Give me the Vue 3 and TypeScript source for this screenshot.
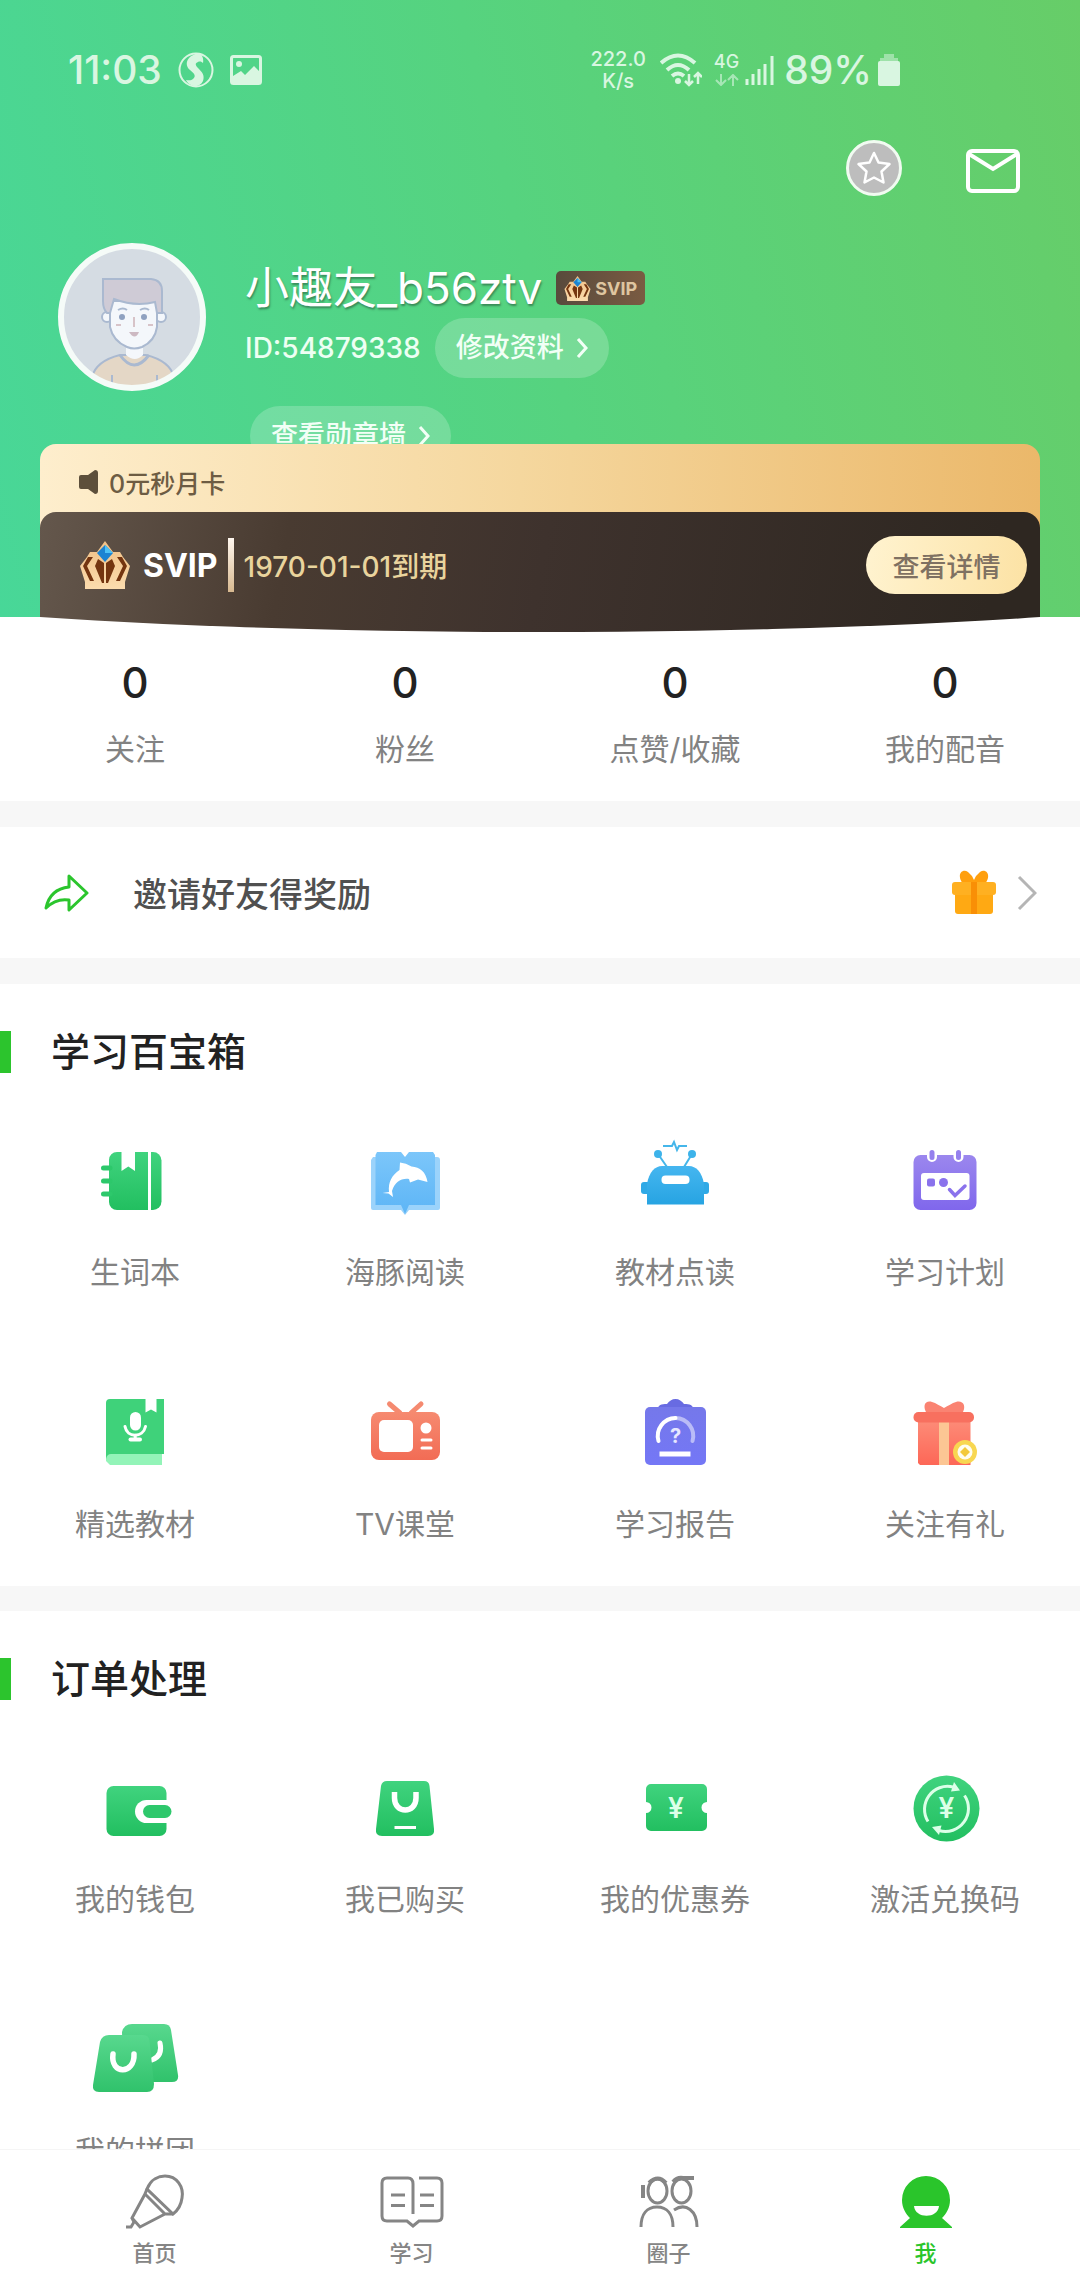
<script setup lang="ts">
interface Entry {
  label: string
  icon: string
}

interface Section {
  title: string
  entries: Entry[]
}

interface Tab extends Entry {
  active?: boolean
}

const stats = [
  { value: 0, label: '关注' },
  { value: 0, label: '粉丝' },
  { value: 0, label: '点赞/收藏' },
  { value: 0, label: '我的配音' },
]

// Inner markup of the 96x96 feature icons
const icons: Record<string, string> = {
  notebook: `
    <path fill="url(#g-green)" d="M30 20h4.500v19l6.800-4.500 6.700 4.500V20h13v58H30a8 8 0 0 1-8-8V28a8 8 0 0 1 8-8z"/>
    <path fill="url(#g-green)" d="M64 20h2a8.500 8.500 0 0 1 8.500 8.500v41A8.500 8.500 0 0 1 66 78h-2z"/>
    <path stroke="#2dc86b" stroke-width="5" stroke-linecap="round" d="M16.500 36H23M16.500 49H23M16.500 62H23"/>`,
  dolphin: `
    <path fill="#9bd3fb" d="M16 25h64a3 3 0 0 1 3 3v48q0 2-2 2H52l-4 5-4-5H16q-2 0-2-2V28z"/>
    <path fill="url(#g-sky)" d="M20 20h24l4 5 4-5h24l2 3v50H52l-4 9-4-9H18.500V23z"/>
    <path fill="#fff" d="M32 60C31 50 35 43 42.500 38L43 30.500Q49 31 54.500 34.500C63 35 69 40 70.500 50L61 47.500 53 50.500 52 47C44 46 38 50 35 59L36 65 31.500 61.500 25.500 61z"/>`,
  robot: `
    <rect x="14" y="50" width="68" height="12" rx="3" fill="#2fa9e6"/>
    <path fill="url(#g-blue)" d="M20 72.500V52C22 40 28 34 35 34h27c7 0 13 6 15 18v20.500z"/>
    <rect x="34.500" y="43.500" width="28" height="8.500" rx="4" fill="#fff"/>
    <path fill="none" stroke="#45b6ea" stroke-width="2" d="M31 22l9 13M65 22l-8 13M36 14h9l2-4 3 8 2-4h8"/>
    <circle cx="31" cy="22" r="4" fill="#3db3ea"/><circle cx="65" cy="22" r="4" fill="#3db3ea"/>`,
  calendar: `
    <rect x="16.500" y="23" width="63" height="55" rx="7" fill="url(#g-violet)"/>
    <path stroke="#fff" stroke-width="10" stroke-linecap="round" d="M35 20v5M61.500 20v5"/>
    <path stroke="#9580ee" stroke-width="5" stroke-linecap="round" d="M35 20.500v5M61.500 20.500v5"/>
    <rect x="24" y="41" width="48.500" height="27" rx="3" fill="#fff"/>
    <rect x="30" y="46.500" width="8" height="8" rx="2" fill="#8a72ec"/><circle cx="46.500" cy="50.500" r="4.500" fill="#8a72ec"/>
    <path fill="none" stroke="#8a72ec" stroke-width="3.500" stroke-linecap="round" d="M52.500 57.500l5.500 6L68 54"/>`,
  textbook: `
    <path fill="#93f4b8" d="M19 68h56v13H23l-4-4z"/>
    <path fill="#3fd27a" d="M23 15h35.500v13.500l5.500-3 5.500 3V15H77v55H24q-4 0-5 5V19a4 4 0 0 1 4-4z"/>
    <rect x="43" y="28" width="11" height="18.500" rx="5.500" fill="#fff"/>
    <path fill="none" stroke="#fff" stroke-width="3" stroke-linecap="round" d="M38 42.500C40 54 56 54 58.500 42.500M48.200 51v4"/>
    <path stroke="#fff" stroke-width="4" stroke-linecap="round" d="M43.500 55.500h9.500"/>`,
  tv: `
    <path stroke="#f58a70" stroke-width="5" stroke-linecap="round" d="M32.500 20L43 29M64 20L54 29"/>
    <rect x="14" y="28" width="69" height="48" rx="8" fill="url(#g-coral)"/>
    <rect x="22" y="36" width="34" height="32" rx="5" fill="#fff"/>
    <circle cx="69" cy="44" r="5.500" fill="#fff"/>
    <path stroke="#fff" stroke-width="3" stroke-linecap="round" d="M65 56h9M65 64h9"/>`,
  report: `
    <path fill="#686be2" d="M31 25c0-4 3-5 9-5 2-3 5-5 8.500-5s6.500 2 8.500 5c6 0 9 1 9 5z"/>
    <rect x="18" y="23" width="61" height="58" rx="5" fill="url(#g-indigo)"/>
    <path fill="none" stroke="#fff" stroke-opacity=".5" stroke-width="4" stroke-linecap="round" d="M48.500 34A18 18 0 0 1 65.500 57"/>
    <path fill="none" stroke="#fff" stroke-width="4" stroke-linecap="round" d="M48.500 34A18 18 0 0 0 31.500 57"/>
    <text x="48.500" y="59" text-anchor="middle" font-size="20" font-weight="700" fill="#e6e7ff">?</text>
    <path stroke="#fff" stroke-width="5" d="M32.500 70h31"/>`,
  gift: `
    <path fill="#fa8372" d="M30 30c-5-8-2-14 5-12 4 1 8 4 12 6 4-2 8-5 12-6 7-2 11 4 6 12z"/>
    <path fill="url(#g-red)" d="M21 36h52.500v45H23l-2-2z"/>
    <rect x="42" y="38" width="10" height="43" fill="#fcc694"/>
    <rect x="16.500" y="28" width="60.500" height="10.500" rx="5" fill="#f8705f"/>
    <circle cx="68" cy="68" r="12" fill="#f8d751"/><circle cx="68" cy="68" r="7.500" fill="#fffdf0"/>
    <path fill="#f3c93c" d="M68 63l5 5-5 5-5-5z"/>`,
  wallet: `
    <rect x="19.500" y="27" width="60" height="50" rx="7" fill="url(#g-green)"/>
    <path fill="#fff" d="M59.500 41H86v23H59.500a11.500 11.500 0 0 1 0-23z"/>
    <rect x="56" y="46" width="28.500" height="13" rx="6.500" fill="#2ec86c"/>`,
  bag: `
    <path fill="url(#g-green)" d="M30 22h37q5 0 5.500 5L77 70q1 7-6 7H25q-7 0-6-7L24 27q1-5 6-5z"/>
    <path fill="none" stroke="#fff" stroke-width="5.500" d="M37.500 33v6c0 16 21.500 16 21.500 0v-6"/>
    <path stroke="#fff" stroke-width="3" d="M37.500 68.500h21.500"/>`,
  coupon: `
    <path fill="url(#g-green)" d="M24 25h51a5 5 0 0 1 5 5v13a5.500 5.500 0 0 0 0 11v13a5 5 0 0 1-5 5H24a5 5 0 0 1-5-5V54a5.500 5.500 0 0 0 0-11V30a5 5 0 0 1 5-5z"/>
    <text x="49" y="59" text-anchor="middle" font-size="28" font-weight="600" fill="#dcffe8">¥</text>`,
  exchange: `
    <circle cx="49.500" cy="49.500" r="33" fill="url(#g-green)"/>
    <path fill="none" stroke="#dcffe8" stroke-width="3" d="M31 62.500A23 23 0 0 1 56 28M67.500 36.500A23 23 0 0 1 42 71.500"/>
    <path fill="#dcffe8" d="M57 23l6 8.500-9 1zM42 76l-7-8 9.500-1.500z"/>
    <text x="49.500" y="59" text-anchor="middle" font-size="28" font-weight="600" fill="#dcffe8">¥</text>`,
  group: `
    <path fill="url(#g-mint)" d="M45 13h32q6 0 7 6l7 45q1 7-6 7H36l-1-50q2-8 10-8z"/>
    <path fill="none" stroke="#fff" stroke-width="5" stroke-linecap="round" d="M73 32q3 13-8 17"/>
    <path fill="url(#g-mint)" d="M22 24h34q6 0 6.500 6L67 73q0 8-7 8H12q-7 0-6-7l7-43q2-7 9-7z"/>
    <path fill="none" stroke="#fff" stroke-width="5.500" stroke-linecap="round" d="M26 43c-3 21 22 21 21 0"/>`,
}

const sections: Section[] = [
  {
    title: '学习百宝箱',
    entries: [
      { label: '生词本', icon: 'notebook' },
      { label: '海豚阅读', icon: 'dolphin' },
      { label: '教材点读', icon: 'robot' },
      { label: '学习计划', icon: 'calendar' },
      { label: '精选教材', icon: 'textbook' },
      { label: 'TV课堂', icon: 'tv' },
      { label: '学习报告', icon: 'report' },
      { label: '关注有礼', icon: 'gift' },
    ],
  },
  {
    title: '订单处理',
    entries: [
      { label: '我的钱包', icon: 'wallet' },
      { label: '我已购买', icon: 'bag' },
      { label: '我的优惠券', icon: 'coupon' },
      { label: '激活兑换码', icon: 'exchange' },
      { label: '我的拼团', icon: 'group' },
    ],
  },
]

// Inner markup of the 64x56 tab icons, stroked with the tab colour
const tabIcons: Record<string, string> = {
  home: `
    <path d="M24 15C28 5 36 2 42 2c12 0 19 11 17 22-1 8-5 13-9 16z"/>
    <path d="M24 15l-2 5 20 20 8 0M22 20L9 44l8 9 25-13M9 44l2 4-3 5H3"/>`,
  study: `
    <path d="M33 40V10q0-6-5-6H7Q2 4 2 9v33q0 5 5 5h20l6 5 6-5h18q5 0 5-5V9q0-5-5-5H39"/>
    <path d="M11 21h14M11 31.500h14M40 21h14M40 31.500h14"/>`,
  circle: `
    <ellipse cx="20.500" cy="17" rx="9.500" ry="12"/><ellipse cx="44.500" cy="17" rx="9.500" ry="12"/>
    <path stroke-width="4" d="M12 9q9-9 17 0M36 8q4-5 10-4h11M6 11v13"/>
    <path d="M4 53c0-13 6-20 16-20s16 7 16 20M37 36c12-8 23 1 23 17"/>`,
  me: `
    <path fill="currentColor" stroke="none" d="M32 2a24 24 0 0 1 24 24c0 8-4 14-8 18l10 9v1H6v-1l10-9c-4-4-8-10-8-18A24 24 0 0 1 32 2z"/>
    <path fill="#fff" stroke="none" d="M20 32h25c-1 13-24 13-25 0z"/>`,
}

const tabs: Tab[] = [
  { label: '首页', icon: 'home' },
  { label: '学习', icon: 'study' },
  { label: '圈子', icon: 'circle' },
  { label: '我', icon: 'me', active: true },
]
</script>

<template>
  <div class="app">
    <svg class="defs" width="0" height="0" aria-hidden="true">
      <defs>
        <linearGradient id="g-green" x2="0" y2="1"><stop stop-color="#40d37e" /><stop offset="1" stop-color="#22bf60" /></linearGradient>
        <linearGradient id="g-mint" x2="0" y2="1"><stop stop-color="#58d88e" /><stop offset="1" stop-color="#30c26b" /></linearGradient>
        <linearGradient id="g-sky" x2="0" y2="1"><stop stop-color="#7cc6fa" /><stop offset="1" stop-color="#5db5f6" /></linearGradient>
        <linearGradient id="g-blue" x2="0" y2="1"><stop stop-color="#45b6f0" /><stop offset="1" stop-color="#27a4e2" /></linearGradient>
        <linearGradient id="g-violet" x2="0" y2="1"><stop stop-color="#9b87ee" /><stop offset="1" stop-color="#8067ec" /></linearGradient>
        <linearGradient id="g-coral" x2="0" y2="1"><stop stop-color="#f68a70" /><stop offset="1" stop-color="#f26c55" /></linearGradient>
        <linearGradient id="g-indigo" x2="0" y2="1"><stop stop-color="#7578ea" /><stop offset="1" stop-color="#7477f6" /></linearGradient>
        <linearGradient id="g-red" x2="0" y2="1"><stop stop-color="#fd8c78" /><stop offset="1" stop-color="#fd6757" /></linearGradient>
        <linearGradient id="g-gold" x2="0" y2="1"><stop stop-color="#f0bf85" /><stop offset="1" stop-color="#fbdcae" /></linearGradient>
        <symbol id="crown" viewBox="0 0 50 48">
          <path fill="url(#g-gold)" d="M25 0l8 11h7l3 5 7 9-5 16v7H5v-7L0 25l7-9 3-5h7z" />
          <path fill="#743510" d="M8 16h5l-6 9 7 15h-4L3 25zM42 16h-5l6 9-7 15h4l7-15zM18 18l6 4v20l-2 0-7-17zM32 18l-6 4v20l2 0 7-17z" />
          <path fill="#1b83d2" d="M25 4l8 8-8 9-8-9z" />
          <path fill="#4cc1f5" d="M25 4l8 8h-8z" />
        </symbol>
      </defs>
    </svg>

    <main class="content">
      <header class="hero">
        <div class="status">
          <div class="status-group">
            <span class="clock">11:03</span>
            <svg class="status-app" viewBox="0 0 36 36" aria-hidden="true">
              <circle cx="18" cy="18" r="16.500" fill="none" stroke="currentColor" stroke-width="2" />
              <path fill="currentColor" d="M22 1C8 3 6 13 12 18c5 4 6 6 3 9-2 2-5 1-7 1 4 8 14 8 17 1 2-6-1-9-5-13-3-3-3-5 0-6 2-1 4 0 5 1 1-4-1-8-3-10z" />
            </svg>
            <svg class="status-picture" viewBox="0 0 32 30" aria-hidden="true">
              <rect x="1.500" y="1.500" width="29" height="27" rx="2" fill="none" stroke="currentColor" stroke-width="3" />
              <circle cx="9" cy="9" r="3" fill="currentColor" />
              <path fill="currentColor" d="M3 21l8-5 4 4 9-9 6 6v11H3z" />
            </svg>
          </div>
          <div class="status-group status-right">
            <div class="speed">
              <span>222.0</span>
              <span>K/s</span>
            </div>
            <svg class="status-wifi" viewBox="0 0 42 34" aria-hidden="true">
              <path fill="none" stroke="currentColor" stroke-width="4" d="M1 10q17-15 34 0M7 17q11-10 22 0M12 23q6-5 12 0" />
              <circle cx="18" cy="28" r="3" fill="currentColor" />
              <path fill="none" stroke="currentColor" stroke-width="2.500" d="M29 21v11m-4-4l4 4 4-4M38 31V20m-4 4l4-4 4 4" />
            </svg>
            <div class="network">
              <span>4G</span>
              <svg viewBox="0 0 24 12" aria-hidden="true">
                <path fill="none" stroke="currentColor" stroke-width="2" d="M6 0v10M1 6l5 5 5-5M18 12V2m-5 4l5-5 5 5" />
              </svg>
            </div>
            <svg class="status-signal" viewBox="0 0 29 29" aria-hidden="true">
              <path stroke="currentColor" stroke-width="3" d="M2 29v-6M8 29V18M14 29V13M20 29V8M27 29V0" />
            </svg>
            <span class="percent">89%</span>
            <svg class="status-battery" viewBox="0 0 22 32" aria-hidden="true">
              <path fill="currentColor" fill-opacity=".5" d="M6 0h10v4h4v4H2V4h4z" />
              <rect y="7" width="22" height="25" rx="2" fill="currentColor" />
            </svg>
          </div>
        </div>

        <div class="actions">
          <button class="icon-button" aria-label="收藏">
            <svg width="56" height="56" viewBox="0 0 56 56">
              <circle cx="28" cy="28" r="26.500" fill="#bdbdbd" stroke="#f1fbf1" stroke-width="3" />
              <path fill="none" stroke="#fff" stroke-width="2.500" stroke-linejoin="round" d="M28 13l4.500 9.500 11 1.500-8 7.500 2 11L28 37.500 18.500 42.500l2-11-8-7.500 11-1.500z" />
            </svg>
          </button>
          <button class="icon-button" aria-label="消息">
            <svg width="54" height="50" viewBox="0 0 54 50">
              <rect x="2" y="8" width="50" height="40" rx="4" fill="none" stroke="#fff" stroke-width="4" />
              <path fill="none" stroke="#fff" stroke-width="4" d="M3 11l24 15 24-15" />
            </svg>
          </button>
        </div>

        <div class="profile">
          <svg class="avatar" viewBox="0 0 148 148" role="img" aria-label="头像">
            <clipPath id="face"><circle cx="74" cy="74" r="70" /></clipPath>
            <circle cx="74" cy="74" r="71" fill="#d5dce3" />
            <g clip-path="url(#face)" stroke="#aab9d0" stroke-width="2">
              <path fill="#e4d7c6" d="M34 150v-16q4-16 28-22h26q24 6 28 22v16z" />
              <path fill="#f4f7fb" stroke="none" d="M68 98h17v14q-8 8-17 0z" />
              <path fill="none" stroke-width="3" d="M62 112q14 20 29 0" />
              <circle cx="49" cy="74" r="5" fill="#f4f7fb" /><circle cx="103" cy="74" r="5" fill="#f4f7fb" />
              <path fill="#f4f7fb" d="M52 58h47v26q-2 14-15 20-8 3-15 0-14-6-17-20z" />
              <path fill="#cfcbd6" d="M45 36h48q11 1 11 12v22h-5l-2-11q-20 5-41-3l-4 14h-3q-4-4-4-12z" />
              <path fill="none" d="M60 67q5-3 9 0M82 67q5-3 9 0M54 132v8M99 132v8" />
              <path fill="none" stroke="#d7c3c8" d="M76 74v10M58 82h5M90 82h5" />
              <path fill="#cdb9c2" stroke="none" d="M71 89h10q-4 9-10 0" />
              <circle cx="64" cy="74" r="3" fill="#8fa1c0" stroke="none" /><circle cx="86" cy="74" r="3" fill="#8fa1c0" stroke="none" />
            </g>
            <circle cx="74" cy="74" r="71" fill="none" stroke="#f5fbf8" stroke-width="6" />
          </svg>
          <div class="info">
            <div class="name-row">
              <h1 class="name">小趣友_b56ztv</h1>
              <span class="badge"><svg width="27" height="25" aria-hidden="true"><use href="#crown" /></svg>SVIP</span>
            </div>
            <div class="id-row">
              <span>ID:54879338</span>
              <button class="pill">修改资料<svg class="pill-arrow" viewBox="0 0 12 20" aria-hidden="true"><path d="M2 1l8 9-8 9" /></svg></button>
            </div>
            <button class="pill medal">查看勋章墙<svg class="pill-arrow" viewBox="0 0 12 20" aria-hidden="true"><path d="M2 1l8 9-8 9" /></svg></button>
          </div>
        </div>

        <section class="vip">
          <p class="notice">
            <svg width="19" height="24" viewBox="0 0 19 24" aria-hidden="true"><path fill="#5d4f3b" d="M2 5h7l7-5q3 0 3 3v18q0 3-3 3l-7-5H2q-2 0-2-2V7q0-2 2-2z" /></svg>
            0元秒月卡
          </p>
          <div class="vip-card">
            <svg width="50" height="48" aria-hidden="true"><use href="#crown" /></svg>
            <strong class="vip-name">SVIP</strong>
            <span class="divider"></span>
            <span class="expiry">1970-01-01到期</span>
            <button class="detail">查看详情</button>
          </div>
        </section>
      </header>

      <section class="stats">
        <a v-for="stat in stats" :key="stat.label" class="stat" href="#">
          <span class="stat-value">{{ stat.value }}</span>
          <span class="label">{{ stat.label }}</span>
        </a>
      </section>

      <a class="invite" href="#">
        <svg width="46" height="40" viewBox="0 0 46 40" aria-hidden="true">
          <path fill="none" stroke="#2bc52d" stroke-width="3" stroke-linejoin="round" d="M26 3l18 17-18 17V27Q13 25 3 35 7 16 26 14z" />
        </svg>
        <span class="invite-text">邀请好友得奖励</span>
        <svg width="46" height="46" viewBox="0 0 46 46" aria-hidden="true">
          <path fill="#ff9f0d" d="M12 14C5 5 11-2 17 2q4 3 6 8 2-5 6-8c6-4 12 3 5 12z" />
          <path fill="#ffa913" d="M4 22h38v19q0 3-3 3H7q-3 0-3-3z" />
          <rect x="1" y="12" width="44" height="13" rx="3" fill="#ffb021" />
          <rect x="20" y="12" width="6" height="32" fill="#f98f06" />
        </svg>
        <svg class="invite-arrow" width="20" height="36" viewBox="0 0 20 36" aria-hidden="true">
          <path fill="none" stroke="#b5b5b5" stroke-width="3" d="M2 2l16 16L2 34" />
        </svg>
      </a>

      <section v-for="section in sections" :key="section.title" class="section">
        <h2 class="title">{{ section.title }}</h2>
        <div class="grid">
          <a v-for="entry in section.entries" :key="entry.label" class="entry" href="#">
            <svg class="entry-icon" viewBox="0 0 96 96" aria-hidden="true" v-html="icons[entry.icon]"></svg>
            <span class="label">{{ entry.label }}</span>
          </a>
        </div>
      </section>
    </main>

    <nav class="tabbar">
      <a v-for="tab in tabs" :key="tab.label" class="tab" :class="{ active: tab.active }" href="#">
        <svg class="tab-icon" viewBox="0 0 64 56" aria-hidden="true" v-html="tabIcons[tab.icon]"></svg>
        <span>{{ tab.label }}</span>
      </a>
    </nav>
  </div>
</template>

<style>
body {
  margin: 0;
}
</style>

<style scoped>
.app {
  display: flex;
  flex-direction: column;
  height: 100vh;
  background: #fff;
  color: #222;
  font-family: Inter, "Noto Sans CJK SC", sans-serif;
}

.app *,
.app *::before {
  box-sizing: border-box;
}

.app svg {
  display: block;
  flex: none;
}

.app .defs {
  position: absolute;
}

a {
  color: inherit;
  text-decoration: none;
}

button {
  padding: 0;
  border: 0;
  background: none;
  color: inherit;
  font: inherit;
}

h1,
h2,
p {
  margin: 0;
  font-weight: 400;
}

.content {
  flex: 1;
  min-height: 0;
  overflow-y: auto;
  scrollbar-width: none;
}

/* Green header */
.hero {
  position: relative;
  z-index: 1;
  display: flex;
  flex-direction: column;
  padding-top: 48px;
  background: linear-gradient(75deg, #48d798 0%, #56d37f 50%, #67cd68 100%);
  color: #fff;
}

.status {
  display: flex;
  justify-content: space-between;
  height: 44px;
  padding: 0 180px 0 68px;
  color: #d9f6e1;
  font-weight: 500;
}

.status-group {
  display: flex;
  align-items: center;
  gap: 16px;
}

.status-right {
  gap: 6px;
}

.clock,
.percent {
  font-size: 39px;
  line-height: 44px;
}

.percent {
  margin-left: 4px;
}

.status-app {
  width: 36px;
  height: 36px;
}

.status-picture {
  width: 32px;
  height: 30px;
}

.speed {
  display: flex;
  flex-direction: column;
  align-items: center;
  margin-right: 8px;
  font-size: 20px;
  line-height: 22px;
}

.status-wifi {
  width: 42px;
  height: 34px;
  margin-right: 6px;
}

.network {
  display: flex;
  flex-direction: column;
  align-items: center;
  gap: 4px;
  font-size: 18px;
  line-height: 16px;
}

.network svg {
  width: 24px;
  height: 12px;
  opacity: 0.6;
}

.status-signal {
  width: 29px;
  height: 29px;
}

.status-battery {
  width: 22px;
  height: 32px;
}

.actions {
  display: flex;
  justify-content: flex-end;
  align-items: center;
  gap: 64px;
  margin-top: 48px;
  padding-right: 60px;
}

.profile {
  display: flex;
  align-items: flex-start;
  gap: 39px;
  margin-top: 47px;
  padding: 0 58px;
}

.avatar {
  width: 148px;
  height: 148px;
}

.info {
  padding-top: 15px;
}

.name-row {
  display: flex;
  align-items: center;
  gap: 14px;
  height: 60px;
}

.name {
  font-size: 44px;
  line-height: 58px;
  text-shadow: 1px 2px 2px rgba(40, 90, 60, 0.6);
}

.badge {
  display: flex;
  align-items: center;
  gap: 4px;
  height: 34px;
  padding: 0 8px;
  border-radius: 5px;
  background: linear-gradient(90deg, #584a3c, #7a5b42);
  color: #dfc5a0;
  font-size: 18px;
  font-weight: 700;
}

.id-row {
  display: flex;
  align-items: center;
  gap: 14px;
  color: #edfff3;
  font-size: 28px;
  font-weight: 500;
}

.pill {
  display: flex;
  align-items: center;
  gap: 12px;
  height: 60px;
  padding: 0 21px;
  border-radius: 30px;
  background: rgba(255, 255, 255, 0.2);
  color: #f2fff6;
  font-size: 27px;
  font-weight: 500;
  line-height: 60px;
}

.pill-arrow {
  width: 12px;
  height: 20px;
  fill: none;
  stroke: currentColor;
  stroke-width: 3px;
}

.medal {
  margin: 28px 0 0 5px;
}

/* Membership card, laid over the lower edge of the medal button */
.vip {
  position: relative;
  margin: -22px 40px -15px;
  border-radius: 16px 16px 0 0;
  background: linear-gradient(90deg, #feeecd 0%, #f5d79e 48%, #ebb86a 100%) top / 100% 100px no-repeat;
}

.notice {
  display: flex;
  align-items: center;
  gap: 11px;
  height: 68px;
  padding: 8px 39px 0;
  color: #6d5c43;
  font-size: 25px;
  font-weight: 500;
}

.vip-card {
  position: relative;
  z-index: 0;
  display: flex;
  align-items: center;
  height: 120px;
  padding: 0 13px 14px 40px;
  overflow: hidden;
  border-radius: 16px 16px 0 0;
}

.vip-card::before {
  content: "";
  position: absolute;
  z-index: -1;
  inset: 0 -30%;
  border-radius: 0 0 50% 50% / 0 0 68px 68px;
  background: linear-gradient(100deg, #65584d 18%, #493b31 34%, #3e322d 50%, #2e2721 78%);
}

.vip-name {
  margin-left: 13px;
  font-size: 32px;
  font-weight: 700;
}

.divider {
  width: 6px;
  height: 54px;
  margin: 0 10px;
  background: linear-gradient(#fff7ef, #d8b990);
}

.expiry {
  color: #e9d49d;
  font-size: 28px;
  font-weight: 500;
}

.detail {
  width: 161px;
  height: 58px;
  margin-left: auto;
  border-radius: 29px;
  background: linear-gradient(100deg, #fff3d0, #fce2a4);
  color: #7f7162;
  font-size: 27px;
  font-weight: 500;
}

/* Counters */
.stats {
  display: grid;
  grid-template-columns: repeat(4, 1fr);
  padding: 36px 0 32px;
}

.stat {
  display: flex;
  flex-direction: column;
  align-items: center;
  gap: 16px;
}

.stat-value {
  font-size: 42px;
  font-weight: 500;
  line-height: 60px;
}

.label {
  color: #828282;
  font-size: 30px;
  line-height: 40px;
}

/* Invitation row */
.invite {
  display: flex;
  align-items: center;
  height: 183px;
  padding: 0 43px;
  border: solid #f7f7f7;
  border-width: 26px 0;
  color: #505050;
  font-size: 34px;
  font-weight: 500;
}

.invite-text {
  flex: 1;
  margin-left: 44px;
}

.invite-arrow {
  margin-left: 20px;
}

/* Feature sections */
.section {
  padding: 47px 0 42px;
}

.section + .section {
  border-top: 25px solid #f7f7f7;
}

.title {
  padding-left: 40px;
  border-left: 11px solid #2cc42d;
  font-size: 39px;
  font-weight: 500;
  line-height: 42px;
}

.grid {
  display: grid;
  grid-template-columns: repeat(4, 1fr);
  row-gap: 92px;
  margin-top: 59px;
}

.entry {
  display: flex;
  flex-direction: column;
  align-items: center;
  gap: 24px;
}

.entry-icon {
  width: 96px;
  height: 96px;
}

/* Bottom navigation */
.tabbar {
  display: grid;
  grid-template-columns: repeat(4, 1fr);
  padding: 24px 26px 13px;
  border-top: 1px solid #f5f5f5;
  background: #fff;
}

.tab {
  display: flex;
  flex-direction: column;
  align-items: center;
  gap: 9px;
  color: #858585;
  font-size: 22px;
  font-weight: 500;
  line-height: 28px;
}

.tab-icon {
  width: 64px;
  height: 56px;
  fill: none;
  stroke: currentColor;
  stroke-width: 3px;
}

.tab.active {
  color: #2ac52b;
}
</style>
